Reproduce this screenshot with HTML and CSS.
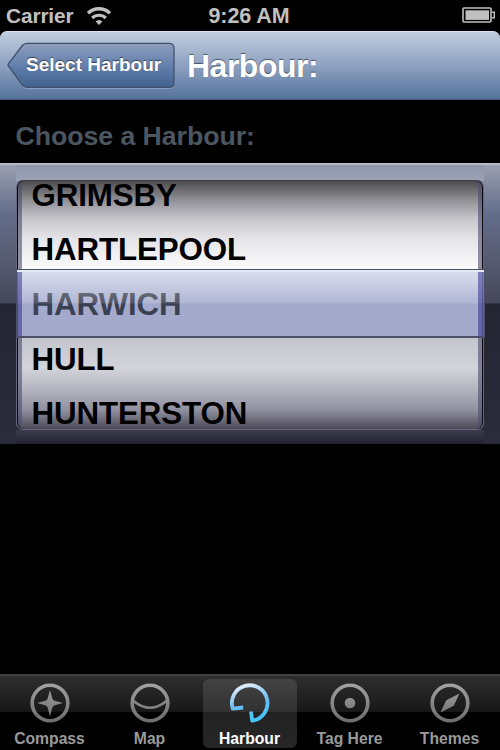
FILE: index.html
```
<!DOCTYPE html>
<html lang="en">
<head>
  <meta charset="UTF-8" />
  <meta name="viewport" content="width=device-width, initial-scale=1.0"/>
  <title>Harbour</title>
  <link rel="stylesheet" href="styles.css">
</head>
<body>
  <div class="status-bar">
    <div class="carrier">
      <span>Carrier</span>
      <svg width="26" height="20" viewBox="0 0 26 20" fill="none" stroke="#c0c0c0">
        <path d="M2 7.200a15.800 15.800 0 0 1 22 0" stroke-width="3.400"/>
        <path d="M6.200 12a9.800 9.800 0 0 1 13.600 0" stroke-width="3.200"/>
        <path d="M13 19l-3.400-3.500a5 5 0 0 1 6.800 0z" fill="#c0c0c0" stroke="none"/>
      </svg>
    </div>
    <span class="time">9:26 AM</span>
    <svg class="battery" width="34" height="17" viewBox="0 0 34 17">
      <rect x="1" y="1" width="28" height="14" rx="1" fill="none" stroke="#c0c0c0" stroke-width="1.600"/>
      <rect x="3.500" y="3.300" width="23.500" height="9.600" fill="#c0c0c0"/>
      <path d="M30 5.300h2.300v5.400H30" fill="none" stroke="#c0c0c0" stroke-width="1.400"/>
    </svg>
  </div>

  <header class="nav-bar">
    <div class="back-btn">
      <svg class="back-shape" width="170" height="50" viewBox="0 0 170 50">
        <defs>
          <linearGradient id="backFill" x1="0" y1="0" x2="0" y2="1">
            <stop offset="0" stop-color="#8f9fbd"/>
            <stop offset="0.5" stop-color="#6480ac"/>
            <stop offset="1" stop-color="#40618f"/>
          </linearGradient>
        </defs>
        <path d="M20 3.400H162q5 0 5 5V42.400q0 5-5 5H20Q17 47.400 15 44.800L1.500 26Q.600 25 1.500 23.700L15 6Q17 3.400 20 3.400z" fill="none" stroke="#a9bcd8" stroke-opacity=".6"/>
        <path d="M20 2.400H162q5 0 5 5V41.400q0 5-5 5H20Q17 46.400 15 43.800L1.500 25Q.600 24 1.500 22.700L15 5Q17 2.400 20 2.400z" fill="url(#backFill)" stroke="#3f506e" stroke-width="1.300"/>
      </svg>
      <span>Select Harbour</span>
    </div>
    <h1>Harbour:</h1>
  </header>

  <main>
    <h2>Choose a Harbour:</h2>
    <div class="picker">
      <div class="wheel">
        <ul class="rows">
          <li>GRIMSBY</li>
          <li>HARTLEPOOL</li>
          <li>HARWICH</li>
          <li>HULL</li>
          <li>HUNTERSTON</li>
        </ul>
      </div>
      <div class="selection"></div>
    </div>
  </main>

  <nav class="tab-bar">
    <svg class="defs" width="0" height="0">
      <defs>
        <linearGradient id="grey" gradientUnits="userSpaceOnUse" x1="0" y1="0" x2="0" y2="40">
          <stop offset="0" stop-color="#a2a2a2"/>
          <stop offset="1" stop-color="#6c6c6c"/>
        </linearGradient>
        <linearGradient id="blue" gradientUnits="userSpaceOnUse" x1="14" y1="2" x2="24" y2="38">
          <stop offset="0" stop-color="#e0edfc"/>
          <stop offset="0.5" stop-color="#6dbdf3"/>
          <stop offset="1" stop-color="#43c5f5"/>
        </linearGradient>
      </defs>
    </svg>
    <div class="tab">
      <svg width="40" height="40" viewBox="0 0 40 40">
        <circle cx="20" cy="20" r="17.800" fill="none" stroke="url(#grey)" stroke-width="3.600"/>
        <path d="M20 7l2.300 8.200q.500 2 2.500 2.500L33 20l-8.200 2.300q-2 .500-2.500 2.500L20 33.500l-2.300-8.700q-.500-2-2.500-2.500L7 20l8.200-2.300q2-.500 2.500-2.500z" fill="url(#grey)"/>
      </svg>
      <span>Compass</span>
    </div>
    <div class="tab">
      <svg width="40" height="40" viewBox="0 0 40 40" fill="none" stroke="url(#grey)">
        <circle cx="20" cy="20" r="17.800" stroke-width="3.600"/>
        <path d="M3.500 18Q20 31.500 36.500 18" stroke-width="2.600"/>
      </svg>
      <span>Map</span>
    </div>
    <div class="tab active">
      <svg width="40" height="40" viewBox="0 0 40 40">
        <path d="M13.200 24.500L2.800 25.700A17.800 17.800 0 1 1 22.200 37.700L21 28.500" fill="none" stroke="url(#blue)" stroke-width="3.800" stroke-linejoin="round"/>
      </svg>
      <span>Harbour</span>
    </div>
    <div class="tab">
      <svg width="40" height="40" viewBox="0 0 40 40">
        <circle cx="20" cy="20" r="17.800" fill="none" stroke="url(#grey)" stroke-width="3.600"/>
        <circle cx="20" cy="20" r="5.300" fill="url(#grey)"/>
      </svg>
      <span>Tag Here</span>
    </div>
    <div class="tab">
      <svg width="40" height="40" viewBox="0 0 40 40">
        <circle cx="20" cy="20" r="17.800" fill="none" stroke="url(#grey)" stroke-width="3.600"/>
        <path d="M29.500 10.500L23.800 22.800L10.500 29.500L16.200 17.200z" fill="url(#grey)"/>
      </svg>
      <span>Themes</span>
    </div>
  </nav>
</body>
</html>
```

FILE: styles.css
```
* {
  box-sizing: border-box;
}

body {
  margin: 0;
  height: 750px;
  display: flex;
  flex-direction: column;
  overflow: hidden;
  font-family: "Liberation Sans", Arial, sans-serif;
  font-weight: bold;
  background-color: #000;
  color: #fff;
}

svg {
  display: block;
}

.status-bar {
  height: 31px;
  display: grid;
  grid-template-columns: 1fr auto 1fr;
  align-items: center;
  padding: 0 4px 0 6px;
  font-size: 21.5px;
  letter-spacing: -0.1px;
  color: #c0c0c0;
}

.time {
  margin: 1px 4px 0 0;
}

.carrier {
  display: flex;
  align-items: center;
  gap: 12px;
  font-size: 20.8px;
}

.battery {
  justify-self: end;
}

.nav-bar {
  height: 69px;
  display: flex;
  align-items: center;
  padding-left: 7px;
  border-top: 1px solid #dbe3ee;
  border-bottom: 1px solid #3c5578;
  border-radius: 7px 7px 0 0;
  background: linear-gradient(#c0cddf, #8ea1c0 50%, #55739b);
}

.back-btn {
  position: relative;
  width: 170px;
  height: 50px;
  padding-left: 19px;
  font-size: 19px;
  line-height: 48px;
  white-space: nowrap;
  text-shadow: 0 -1px 1px rgba(0, 0, 0, 0.5);
}

.back-btn span {
  position: relative;
}

.back-shape {
  position: absolute;
  top: 0;
  left: 0;
}

h1 {
  margin: 0 0 0 10px;
  font-size: 32px;
  letter-spacing: -0.5px;
  line-height: 66px;
  text-shadow: 0 -1.5px 1px rgba(0, 0, 0, 0.5);
}

main {
  flex: 1;
}

h2 {
  height: 63px;
  margin: 0;
  padding: 5px 0 0 15.5px;
  font-size: 26.7px;
  letter-spacing: -0.05px;
  line-height: 62px;
  color: #4c5661;
}

.picker {
  position: relative;
  height: 281px;
  padding: 17px 16px 15px;
  border-top: 2px solid #b5b8c5;
  background:
    linear-gradient(#8f95a7, #9da4b8 16px, transparent 16px) 16px 0 / 468px 100% no-repeat,
    linear-gradient(transparent 265px, #3a3b50 265px, #222230) 16px 0 / 468px 100% no-repeat,
    linear-gradient(#9ba0af, #7d859c 25px, #626c8a 50px, #595f75 85px, #454859 138px, #242432 139px, #2a2c3b);
}

.wheel {
  height: 250px;
  margin-top: -2px;
  overflow: hidden;
  border: 1px solid #666879;
  border-top-color: #3c3d46;
  border-radius: 7px;
  box-shadow: inset 1px 0 #08080e, inset -1px 0 #08080e;
  background:
    linear-gradient(90deg, transparent 1px, rgba(76, 74, 110, 0.6) 1px, rgba(76, 74, 110, 0.6) 5px, transparent 5px, transparent 461px, rgba(76, 74, 110, 0.6) 461px, rgba(76, 74, 110, 0.6) 465px, transparent 465px),
    linear-gradient(#4d4d50, #8c8c91 18px, #c4c4ca 37px, #e4e4e8 57px, #fbfbfc 88px, #b4b8d4 89px, #a2a4ba 122px, #a2a4ba 156px, #c4c4cc 157px, #d3d3da 187px, #b5b5bf 208px, #9090a0 229px, #484552 249px);
}

.rows {
  margin: -12.5px 0 0;
  padding: 0 0 0 14.5px;
  list-style: none;
  font-size: 31.3px;
  letter-spacing: -0.1px;
  line-height: 54.7px;
  color: #000;
}

/* glass bar over the chosen row */
.selection {
  position: absolute;
  top: 104px;
  left: 16px;
  width: 469px;
  height: 69px;
  border: 1px solid #4b5068;
  border-width: 1px 1px 2px;
  box-shadow: inset 0 2px #e6eaf4;
  background:
    linear-gradient(90deg, rgba(76, 76, 166, 0.55) 5px, transparent 5px, transparent 461px, rgba(76, 76, 166, 0.55) 461px),
    linear-gradient(rgba(244, 249, 255, 0.6), rgba(196, 206, 246, 0.42) 33px, rgba(166, 180, 234, 0.35) 34px, rgba(166, 180, 234, 0.37));
}

.tab-bar {
  height: 76px;
  display: flex;
  padding: 3px 0 2px;
  border-top: 2px solid #414141;
  background: linear-gradient(#2e2e2e, #171717 36px, #000 36px) padding-box;
}

.defs {
  position: absolute;
}

.tab {
  flex: 1;
  display: flex;
  flex-direction: column;
  align-items: center;
  padding: 4px 1px 0 0;
  margin: 0 3px;
  border-radius: 6px;
  font-size: 15.7px;
  line-height: 18px;
  color: #999;
  white-space: nowrap;
}

.tab span {
  margin-top: 7px;
}

.active {
  color: #fff;
  background: linear-gradient(#434343, #313131 33px, #222 33px, #262626);
}
```
